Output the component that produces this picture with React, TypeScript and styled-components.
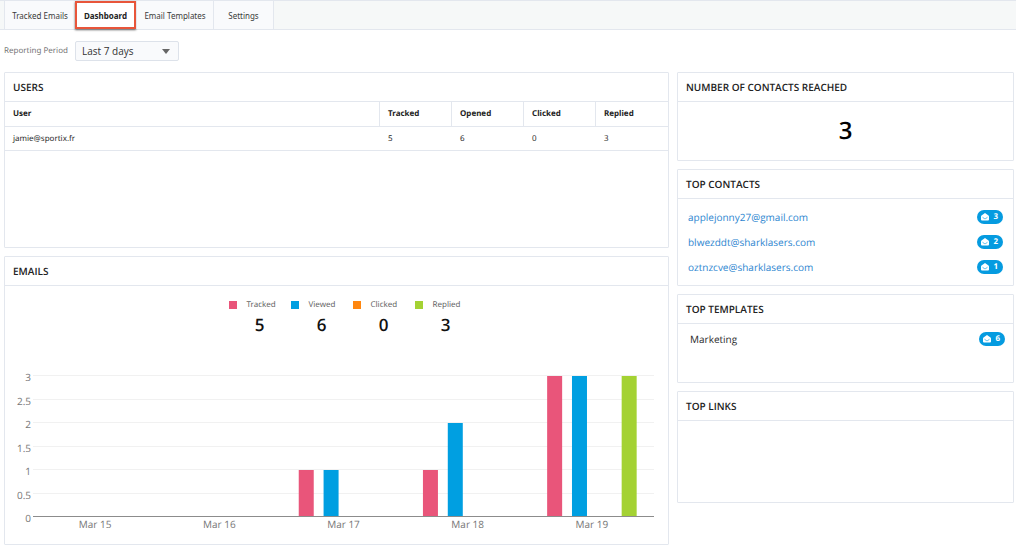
import React from "react";
import styled, { createGlobalStyle } from "styled-components";

const line = "#e3e7ee";
const smallText = `"Noto Sans", "Open Sans", sans-serif`;

const GlobalStyle = createGlobalStyle`
  *, *::before, *::after { box-sizing: border-box; }
  body {
    margin: 0;
    background: #fff;
    color: #2b2b2b;
    font-family: "Open Sans", "Noto Sans", sans-serif;
    font-size: 10px;
    line-height: 16px;
    text-rendering: geometricPrecision;
  }
`;

const Nav = styled.nav`
  display: flex;
  height: 30px;
  padding-left: 4px;
  margin-right: 8px;
  background: #f6f8f8;
  border-top: 1px solid ${line};
  border-bottom: 1px solid ${line};
`;

const Tab = styled.button<{ $width: number; $active?: boolean }>`
  width: ${(p) => p.$width}px;
  padding: 0;
  border: 0;
  border-left: 1px solid ${line};
  background: ${(p) => (p.$active ? "#fff" : "#f9fafc")};
  color: ${(p) => (p.$active ? "#222" : "#3a3a3a")};
  font-family: ${smallText};
  font-size: 8px;
  font-weight: ${(p) => (p.$active ? 700 : 400)};
  white-space: nowrap;
  &:last-child { border-right: 1px solid ${line}; }
  ${(p) =>
    p.$active &&
    `border: 2px solid #e8553a; box-shadow: 0 1px 2px rgba(0, 0, 0, 0.6);`}
`;

const Filter = styled.div`
  display: flex;
  align-items: center;
  gap: 5px;
  padding: 11px 4px;
`;

const FilterLabel = styled.label`
  min-width: 66px;
  color: #777;
  font-family: ${smallText};
  font-size: 8px;
`;

const SelectBox = styled.div`
  position: relative;
  svg {
    position: absolute;
    right: 9px;
    top: 8px;
    pointer-events: none;
  }
`;

const Select = styled.select`
  appearance: none;
  display: block;
  width: 104px;
  height: 20px;
  padding: 0 20px 0 6px;
  border: 1px solid #dde2ea;
  border-radius: 2px;
  background: #f9fafc;
  color: #333;
  font: inherit;
  font-size: 10px;
`;

const Columns = styled.main`
  display: grid;
  grid-template-columns: 665fr 337fr;
  align-items: start;
  gap: 8px;
  padding: 0 10px 0 4px;
`;

const Column = styled.div`
  display: flex;
  flex-direction: column;
  gap: 8px;
  min-width: 0;
`;

const Panel = styled.section<{ $min: number }>`
  min-height: ${(p) => p.$min}px;
  border: 1px solid ${line};
  border-radius: 1px;
`;

const PanelTitle = styled.h2`
  margin: 0;
  padding: 6px 8px;
  border-bottom: 1px solid ${line};
  color: #222;
  font-size: 10px;
  font-weight: 600;
  line-height: 16px;
`;

const Table = styled.table`
  width: 100%;
  border-collapse: separate;
  border-spacing: 0;
  table-layout: fixed;
  font-family: ${smallText};
  font-size: 8px;
  text-align: left;
  th, td {
    height: 24px;
    padding: 0 8px;
    border-bottom: 1px solid ${line};
  }
  th { height: 25px; color: #222; font-weight: 700; }
  th + th { width: 72px; border-left: 1px solid ${line}; }
  th:last-child { width: 73px; }
  td + td { padding-left: 9px; }
`;

const Legend = styled.dl`
  display: flex;
  justify-content: center;
  margin: 11px 0 0;
  padding-left: 32px;
`;

const LegendItem = styled.div`
  width: 62px;
`;

const LegendName = styled.dt<{ $color: string }>`
  display: flex;
  align-items: center;
  gap: 10px;
  color: #666;
  font-family: ${smallText};
  font-size: 8px;
  &::before {
    content: "";
    width: 8px;
    height: 8px;
    background: ${(p) => p.$color};
  }
`;

const LegendValue = styled.dd`
  margin: 0;
  color: #111;
  font-size: 17px;
  font-weight: 600;
  line-height: 24px;
  text-align: center;
`;

const Chart = styled.svg`
  display: block;
  width: 100%;
  margin-top: 24px;
  text { fill: #777; font-size: 10px; }
`;

const BigNumber = styled.p`
  margin: 0;
  color: #000;
  font-size: 24px;
  font-weight: 600;
  line-height: 58px;
  text-align: center;
`;

const List = styled.ul<{ $inset?: boolean }>`
  display: flex;
  flex-direction: column;
  gap: 9px;
  margin: 0;
  padding: ${(p) => (p.$inset ? "7px 8px 8px 12px" : "10px")};
  list-style: none;
`;

const ListItem = styled.li`
  display: flex;
  align-items: center;
  justify-content: space-between;
`;

const ContactLink = styled.a`
  color: #2e86d0;
  text-decoration: none;
`;

const BadgePill = styled.span`
  display: flex;
  align-items: center;
  justify-content: space-between;
  width: 26px;
  height: 14px;
  padding: 0 5px 0 4px;
  border-radius: 7px;
  background: #059be0;
  color: #fff;
  font-size: 8px;
  font-weight: 700;
  line-height: 14px;
`;

function Badge({ count }: { count: number }) {
  return (
    <BadgePill>
      <svg width="8" height="8" viewBox="0 0 16 16" aria-hidden="true">
        <path d="M8 0 L15 5 Q16 6 16 7 V13 Q16 15 14 15 H2 Q0 15 0 13 V7 Q0 6 1 5 Z" fill="#fff" />
        <path d="M3 8.5 L6.5 11 Q8 12 9.500 11 L13 8.5" fill="none" stroke="#059be0" strokeWidth="1.3" />
      </svg>
      {count}
    </BadgePill>
  );
}

const series = [
  { name: "Tracked", color: "#e9557a", total: 5 },
  { name: "Viewed", color: "#009fe1", total: 6 },
  { name: "Clicked", color: "#ff870f", total: 0 },
  { name: "Replied", color: "#a4d233", total: 3 },
];

const days = [
  { label: "Mar 15", values: [0, 0, 0, 0] },
  { label: "Mar 16", values: [0, 0, 0, 0] },
  { label: "Mar 17", values: [1, 1, 0, 0] },
  { label: "Mar 18", values: [1, 2, 0, 0] },
  { label: "Mar 19", values: [3, 3, 0, 3] },
];

const ticks = [0, 0.5, 1, 1.5, 2, 2.5, 3];
const plot = { left: 28, right: 649, top: 15, bottom: 156 };
const yOf = (v: number) => plot.bottom - (v / 3) * (plot.bottom - plot.top);
const groupWidth = (plot.right - plot.left) / days.length;

function EmailChart() {
  return (
    <Chart viewBox="0 0 663 176" role="img" aria-label="Emails per day">
      {ticks.map((t) => (
        <g key={t}>
          <text x={plot.left - 2} y={yOf(t) + 5} textAnchor="end">{t}</text>
          <line x1={plot.left} x2={plot.right} y1={Math.round(yOf(t)) - 0.5} y2={Math.round(yOf(t)) - 0.5} stroke="#f1f1f1" />
        </g>
      ))}
      {days.map((d, i) => {
        const start = plot.left + i * groupWidth;
        return (
          <g key={d.label}>
            {d.values.map((v, j) => (
              <rect
                key={series[j].name}
                x={start + ((j + 1) * groupWidth) / 5 - 7.5}
                y={yOf(v)}
                width={15}
                height={plot.bottom - yOf(v)}
                fill={series[j].color}
              />
            ))}
            <text x={start + groupWidth / 2} y={plot.bottom + 11} textAnchor="middle">{d.label}</text>
          </g>
        );
      })}
      <line x1={plot.left} x2={plot.right} y1={plot.bottom - 0.5} y2={plot.bottom - 0.5} stroke="#8c8c8c" />
    </Chart>
  );
}

export default function App() {
  return (
    <>
      <GlobalStyle />
      <Nav>
        <Tab $width={71}>Tracked Emails</Tab>
        <Tab $width={61} $active>Dashboard</Tab>
        <Tab $width={77}>Email Templates</Tab>
        <Tab $width={61}>Settings</Tab>
      </Nav>
      <Filter>
        <FilterLabel htmlFor="period">Reporting Period</FilterLabel>
        <SelectBox>
          <Select id="period" defaultValue="7">
            <option value="7">Last 7 days</option>
            <option value="30">Last 30 days</option>
          </Select>
          <svg width="8" height="5" viewBox="0 0 8 5" aria-hidden="true">
            <path d="M0 0 H8 L4 5 Z" fill="#666" />
          </svg>
        </SelectBox>
      </Filter>
      <Columns>
        <Column>
          <Panel $min={176}>
            <PanelTitle>USERS</PanelTitle>
            <Table>
              <thead>
                <tr>
                  <th>User</th>
                  <th>Tracked</th>
                  <th>Opened</th>
                  <th>Clicked</th>
                  <th>Replied</th>
                </tr>
              </thead>
              <tbody>
                <tr>
                  <td>jamie@sportix.fr</td>
                  <td>5</td>
                  <td>6</td>
                  <td>0</td>
                  <td>3</td>
                </tr>
              </tbody>
            </Table>
          </Panel>
          <Panel $min={289}>
            <PanelTitle>EMAILS</PanelTitle>
            <Legend>
              {series.map((s) => (
                <LegendItem key={s.name}>
                  <LegendName $color={s.color}>{s.name}</LegendName>
                  <LegendValue>{s.total}</LegendValue>
                </LegendItem>
              ))}
            </Legend>
            <EmailChart />
          </Panel>
        </Column>
        <Column>
          <Panel $min={89}>
            <PanelTitle>NUMBER OF CONTACTS REACHED</PanelTitle>
            <BigNumber>3</BigNumber>
          </Panel>
          <Panel $min={117}>
            <PanelTitle>TOP CONTACTS</PanelTitle>
            <List>
              <ListItem>
                <ContactLink href="#applejonny27">applejonny27@gmail.com</ContactLink>
                <Badge count={3} />
              </ListItem>
              <ListItem>
                <ContactLink href="#blwezddt">blwezddt@sharklasers.com</ContactLink>
                <Badge count={2} />
              </ListItem>
              <ListItem>
                <ContactLink href="#oztnzcve">oztnzcve@sharklasers.com</ContactLink>
                <Badge count={1} />
              </ListItem>
            </List>
          </Panel>
          <Panel $min={89}>
            <PanelTitle>TOP TEMPLATES</PanelTitle>
            <List $inset>
              <ListItem>
                Marketing
                <Badge count={6} />
              </ListItem>
            </List>
          </Panel>
          <Panel $min={112}>
            <PanelTitle>TOP LINKS</PanelTitle>
          </Panel>
        </Column>
      </Columns>
    </>
  );
}
